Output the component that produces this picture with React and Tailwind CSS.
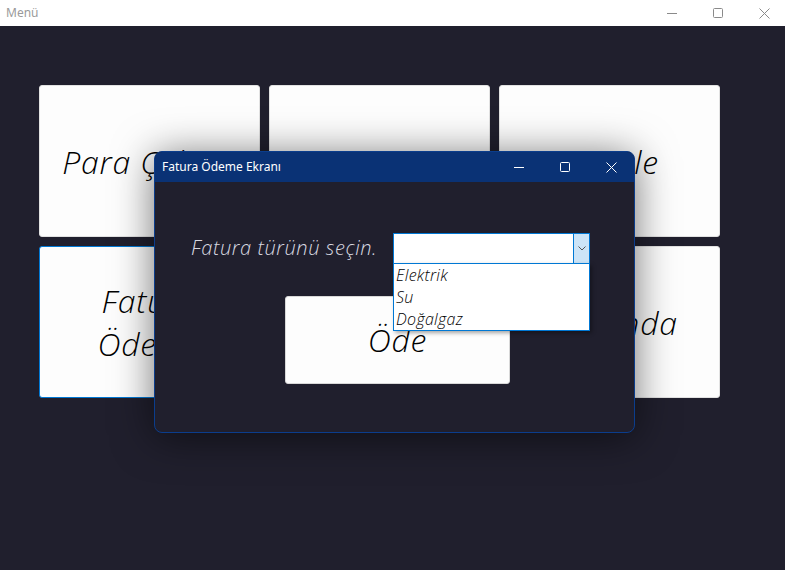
import { useState } from "react";

const cards = [["Para Çekme"], ["Para Yatırma"], ["Havale"], ["Fatura", "Ödeme"], ["Bakiye Sorgula"], ["Hakkında"]];
const options = ["Elektrik", "Su", "Doğalgaz"];

function WinControls({ color }) {
  return (
    <div className="flex h-full">
      <div className="w-[46px] flex items-center justify-center">
        <svg width="10" height="10" viewBox="0 0 10 10"><path d="M0 5.5h10" stroke={color} strokeWidth="1" /></svg>
      </div>
      <div className="w-[46px] flex items-center justify-center">
        <svg width="10" height="10" viewBox="0 0 10 10"><rect x="0.5" y="0.5" width="9" height="9" rx="1" fill="none" stroke={color} strokeWidth="1" /></svg>
      </div>
      <div className="w-[46px] flex items-center justify-center">
        <svg width="11" height="11" viewBox="0 0 11 11"><path d="M0.5 0.5l10 10M10.5 0.5l-10 10" stroke={color} strokeWidth="1" /></svg>
      </div>
    </div>
  );
}

export default function App() {
  const [open] = useState(true);

  return (
    <div className="relative w-[785px] h-[570px] overflow-hidden bg-[#201f2d] font-['Open_Sans',sans-serif]">
      {/* main window title bar */}
      <div className="h-[26px] bg-white flex items-center justify-between">
        <span className="pl-[6px] text-[12px] text-[#9a9a9a] font-['Noto_Sans',sans-serif]">Menü</span>
        <div className="h-full -mr-[2px]">
          <WinControls color="#8a8a8a" />
        </div>
      </div>

      {/* menu cards */}
      <div className="grid grid-cols-[221px_221px_221px] grid-rows-[152px_152px] gap-[9px] pt-[59px] pl-[39px]">
        {cards.map((lines, i) => (
          <div
            key={lines.join(" ")}
            className={`rounded-[3px] bg-[#fdfdfd] flex flex-col items-center justify-center text-center border ${
              i === 3 ? "border-[#0078d4]" : "border-[#e2e2e2]"
            }`}
          >
            {lines.map((l) => (
              <span key={l} className="text-[32px] leading-[43px] italic font-light tracking-[0.8px] text-black whitespace-nowrap">
                {l}
              </span>
            ))}
          </div>
        ))}
      </div>

      {/* dialog window */}
      <div className="absolute left-[154px] top-[151px] w-[481px] h-[282px] rounded-[8px] border border-[#0b3d8c] bg-[#201f2d] shadow-[0_4px_40px_rgba(0,0,0,0.55)]">
        <div className="h-[30px] bg-[#0a3275] rounded-t-[7px] flex items-center justify-between">
          <span className="pl-[7px] text-[12px] text-white font-['Noto_Sans',sans-serif]">Fatura Ödeme Ekranı</span>
          <div className="h-full">
            <WinControls color="#ffffff" />
          </div>
        </div>

        <div className="pt-[51px]">
          <div className="flex items-center">
            <span className="ml-[36px] w-[202px] text-[20px] italic font-light tracking-[0.6px] text-[#d8d8e0] leading-none pb-[2px] whitespace-nowrap">
              Fatura türünü seçin.
            </span>
            <div className="relative">
              <div className="w-[197px] h-[31px] bg-white border border-[#0078d4] flex justify-end">
                <div className="w-[16px] h-full bg-[#cce4f7] border-l border-[#0078d4] flex items-center justify-center">
                  <svg width="8" height="5" viewBox="0 0 8 5"><path d="M0.5 0.5l3.5 3.5l3.5-3.5" fill="none" stroke="#555" strokeWidth="1" /></svg>
                </div>
              </div>
              {open && (
                <div className="absolute left-0 top-[30px] w-[197px] h-[68px] bg-white border border-[#0078d4] shadow-[2px_2px_4px_rgba(0,0,0,0.35)] z-10">
                  {options.map((o) => (
                    <div key={o} className="h-[22px] pl-[2px] text-[16px] leading-[22px] italic font-light tracking-[0.3px] text-black">
                      {o}
                    </div>
                  ))}
                </div>
              )}
            </div>
          </div>

          <div className="mt-[32px] ml-[130px] w-[225px] h-[88px] rounded-[3px] bg-[#fdfdfd] border border-[#d8d8d8] flex items-center justify-center">
            <span className="text-[32px] italic font-light tracking-[0.8px] text-black">Öde</span>
          </div>
        </div>
      </div>
    </div>
  );
}
